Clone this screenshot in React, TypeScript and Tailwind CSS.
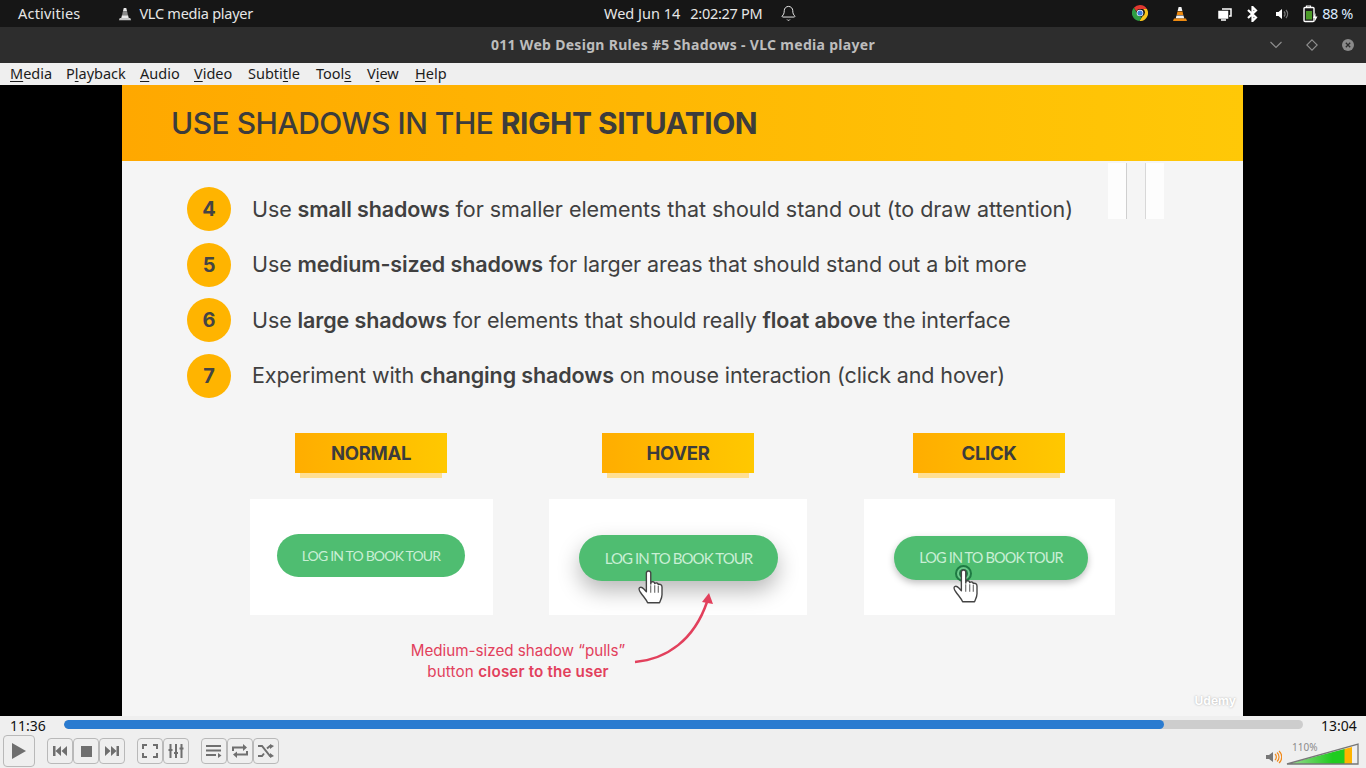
import type { ReactNode } from 'react'
import { Bell } from 'lucide-react'

const menus = [
  { pre: '', key: 'M', post: 'edia', w: 'w-[42px]' },
  { pre: 'P', key: 'l', post: 'ayback', w: 'w-[60px]' },
  { pre: '', key: 'A', post: 'udio', w: 'w-[40px]' },
  { pre: '', key: 'V', post: 'ideo', w: 'w-[40px]' },
  { pre: 'Subti', key: 't', post: 'le', w: 'w-[54px]' },
  { pre: 'Tool', key: 's', post: '', w: 'w-[37px]' },
  { pre: 'V', key: 'i', post: 'ew', w: 'w-[34px]' },
  { pre: '', key: 'H', post: 'elp', w: 'w-[32px]' },
]

function Cone({ size = 16, mono = false }: { size?: number; mono?: boolean }) {
  return (
    <svg width={size} height={size} viewBox="0 0 16 16">
      <path d="M6.6 1h2.8l1 4H5.600z" fill={mono ? '#e8e8e8' : '#f5f5f5'} />
      <path d="M5.400 5.500h5.200l.7 3.500H4.700z" fill={mono ? '#8a8a8a' : '#ee8a10'} />
      <path d="M4.500 9.500h7l.8 3H3.700z" fill={mono ? '#e8e8e8' : '#f5f5f5'} />
      <path d="M2 12.500h12l1 2.500H1z" fill={mono ? '#c4c4c4' : '#ee8a10'} />
    </svg>
  )
}

function Chrome() {
  return (
    <svg className="mb-[1px]" width="16" height="16" viewBox="0 0 16 16">
      <path d="M8 0a8 8 0 0 1 6.930 4H8a4 4 0 0 0-3.700 2.400L1.900 2.800A8 8 0 0 1 8 0z" fill="#e0392f" />
      <path d="M14.930 4A8 8 0 0 1 7.400 16l3.300-5a4 4 0 0 0 .4-7z" fill="#f8c51c" />
      <path d="M1.900 2.800l3.500 6.100A3.800 3.800 0 0 0 10 11.500L7.400 16A8 8 0 0 1 1.900 2.800z" fill="#2f9e44" />
      <circle cx="8" cy="8" r="3.300" fill="#fff" />
      <circle cx="8" cy="8" r="2.600" fill="#3b7ddd" />
    </svg>
  )
}

function TopBar() {
  return (
    <div className="relative flex h-[27px] shrink-0 items-center bg-[#161616] text-[14.500px] text-[#e6e6e6]">
      <span className="ml-[18px] tracking-[0.2px]">Activities</span>
      <span className="ml-[38px] flex items-center gap-[7px] tracking-[-0.25px]">
        <Cone size={14} mono />
        VLC media player
      </span>
      <div className="absolute left-[604px] top-0 flex h-[27px] items-center">
        <span>Wed Jun 14</span>
        <span className="ml-[10px] tracking-[-0.3px]">2:02:27 PM</span>
        <Bell className="ml-[18px] h-[17px] w-[17px]" strokeWidth={1.400} />
      </div>
      <div className="ml-auto flex items-center">
        <Chrome />
        <span className="ml-[24px]"><Cone size={16} /></span>
        <svg className="ml-[30px]" width="14" height="14" viewBox="0 0 14 14" fill="none" stroke="#fff" strokeWidth="1.500">
          <rect x="1" y="4.500" width="8.500" height="6.500" fill="#fff" />
          <path d="M4 2h9v7h-2M3 13h5" />
        </svg>
        <svg className="ml-[14px]" width="13" height="16" viewBox="0 0 13 16" fill="none" stroke="#fff" strokeWidth="2.200">
          <path d="M2 4l8 7.500L6.500 15V1L10 4.500 2 12" />
        </svg>
        <svg className="ml-[16px]" width="14" height="14" viewBox="0 0 14 14">
          <path d="M1 5h2.500L7 2v10L3.500 9H1z" fill="#fff" />
          <path d="M9 4.500a3.500 3.500 0 0 1 0 5M11 3a6 6 0 0 1 0 8" fill="none" stroke="#777" strokeWidth="1.300" />
        </svg>
        <svg className="ml-[14px]" width="16" height="18" viewBox="0 0 16 18">
          <path d="M3.500 2.500V1h4v1.500" fill="none" stroke="#fff" strokeWidth="1.200" />
          <rect x="1" y="2.500" width="10" height="14" rx="1" fill="none" stroke="#fff" strokeWidth="1.400" />
          <rect x="3" y="6" width="6" height="8.500" fill="#4b9a28" />
          <path d="M12.500 8l-2.500 5h2l-.500 4 3-5.500h-2z" fill="#fff" />
        </svg>
        <span className="ml-[3px] mr-[13px] tracking-[-0.4px] text-[#dcebff]">88 %</span>
      </div>
    </div>
  )
}

function TitleBar() {
  return (
    <div className="relative flex h-[36px] shrink-0 items-center justify-center bg-[#2d2d2d] pb-[2px] text-[14px] font-bold tracking-[0.3px] text-[#bdbdbd]">
      011 Web Design Rules #5 Shadows - VLC media player
      <div className="absolute right-[12px] top-[12px] flex items-center gap-[24px]">
        <svg width="12" height="8" viewBox="0 0 12 8" fill="none" stroke="#8f8f8f" strokeWidth="1.100">
          <path d="M.5 1L6 6.500 11.500 1" />
        </svg>
        <svg width="12" height="12" viewBox="0 0 12 12" fill="none" stroke="#8f8f8f" strokeWidth="1.100">
          <path d="M6 .8L11.200 6 6 11.200 .8 6z" />
        </svg>
        <svg width="12" height="12" viewBox="0 0 12 12">
          <circle cx="6" cy="6" r="6" fill="#8a8a8a" />
          <path d="M3.800 3.800l4.400 4.400M8.200 3.800l-4.400 4.400" stroke="#2d2d2d" strokeWidth="1.300" />
        </svg>
      </div>
    </div>
  )
}

function MenuBar() {
  return (
    <div className="flex h-[22px] shrink-0 items-center gap-[14px] bg-[#efefef] pl-[10px] text-[14.500px] text-[#1c1c1c]">
      {menus.map((m) => (
        <span key={m.pre + m.key} className={m.w}>
          {m.pre}
          <span className="underline underline-offset-2">{m.key}</span>
          {m.post}
        </span>
      ))}
    </div>
  )
}

function Num({ n }: { n: number }) {
  return (
    <div className="flex h-[44px] w-[44px] shrink-0 items-center justify-center rounded-full bg-[#ffb400] text-[20px] font-bold text-[#444]">
      {n}
    </div>
  )
}

function Hand({ className }: { className: string }) {
  return (
    <svg className={className} width="30" height="40" viewBox="0 0 24 32">
      <path
        d="M7.500 3a1.800 1.800 0 0 1 3.500 0v9l.3-1.500c1.500-.8 2.700 0 2.900 1.200.900-1 2.600-.6 2.900.8 1.300-.7 2.900.2 2.900 1.800v6.200c0 2.500-1 4-2 6.500H8.500c-1-2.500-3-4.500-5.500-8-.9-1.300-2-3-1-4 1.200-1 2.600 0 3.500 1l2 2.200z"
        fill="#fff"
        stroke="#444"
        strokeWidth="1.100"
        strokeLinejoin="round"
      />
      <path d="M11 13v6M14.200 13v6M17 13.500V19" stroke="#555" strokeWidth="0.800" />
    </svg>
  )
}

function Label({ text, className = '' }: { text: string; className?: string }) {
  return (
    <div className={`relative mb-[26px] h-[40px] w-[152px] ${className}`}>
      <div className="absolute bottom-[-5px] left-[5px] right-[5px] h-[10px] bg-[#ffdf93]" />
      <div className="absolute inset-0 flex items-center justify-center bg-gradient-to-r from-[#ffad00] to-[#ffc800] pt-[2px] text-[18.500px] font-bold tracking-[-0.300px] text-[#3c3c3c]">
        {text}
      </div>
    </div>
  )
}

function Btn({ className }: { className: string }) {
  return (
    <button className={`flex items-center justify-center rounded-full bg-[#4fbd71] font-['Lato'] text-[#c9efd5] ${className}`}>
      LOG IN TO BOOK TOUR
    </button>
  )
}

function Slide() {
  return (
    <div className="relative h-full w-[1121px] overflow-hidden bg-[#f5f5f5] font-['Inter'] text-[#404040]">
      <div className="flex h-[76px] items-center bg-gradient-to-r from-[#ffa800] to-[#ffc807] pl-[49px] text-[30px] font-medium tracking-[-0.5px] text-[#3c3c3c]">
        USE SHADOWS IN THE&nbsp;<b className="font-bold">RIGHT SITUATION</b>
      </div>
      <div className="absolute left-[986px] top-[78px] flex h-[56px]">
        <div className="w-[18px] bg-[#fdfdfd]" />
        <div className="w-px bg-[#cfcfcf]" />
        <div className="w-[18px]" />
        <div className="w-px bg-[#d8d8d8]" />
        <div className="w-[18px] bg-[#fdfdfd]" />
      </div>

      <div className="ml-[65px] mt-[26px] flex flex-col gap-[11.500px] text-[21.500px] tracking-[-0.110px]">
        <div className="flex items-center gap-[21px]">
          <Num n={4} />
          <span>Use <b className="font-semibold">small shadows</b> <span className="tracking-[-0.03px]">for smaller elements that should stand out (to draw attention)</span></span>
        </div>
        <div className="flex items-center gap-[21px]">
          <Num n={5} />
          <span>Use <b className="font-semibold">medium-sized shadows</b> for larger areas that should stand out a bit more</span>
        </div>
        <div className="flex items-center gap-[21px]">
          <Num n={6} />
          <span>Use <b className="font-semibold">large shadows</b> for elements that should really <b className="font-semibold">float above</b> the interface</span>
        </div>
        <div className="flex items-center gap-[21px]">
          <Num n={7} />
          <span>Experiment with <b className="font-semibold">changing shadows</b> on mouse interaction (click and hover)</span>
        </div>
      </div>

      <div className="ml-[128px] mt-[35px] flex gap-[56px]">
        <div className="flex w-[243px] flex-col items-center">
          <Label text="NORMAL" className="mr-[1px]" />
          <div className="flex h-[116px] w-full items-center justify-center bg-white">
            <Btn className="mb-[3px] mr-[1px] h-[43px] w-[188px] text-[14px] tracking-[-0.82px]" />
          </div>
        </div>
        <div className="flex w-[258px] flex-col items-center">
          <Label text="HOVER" />
          <div className="relative flex h-[116px] w-full items-center justify-center bg-white">
            <Btn className="ml-[1px] mt-[3px] h-[46px] w-[199px] text-[15px] tracking-[-0.92px] shadow-[0_10px_22px_rgba(0,0,0,0.28)]" />
            <Hand className="absolute left-[88px] top-[70px]" />
          </div>
        </div>
        <div className="ml-[1px] flex w-[251px] flex-col items-center">
          <Label text="CLICK" className="mr-[1px]" />
          <div className="relative flex h-[116px] w-full items-center justify-center bg-white">
            <Btn className="ml-[3px] mt-[2px] h-[44px] w-[194px] text-[14.500px] tracking-[-0.85px] shadow-[0_3px_7px_rgba(0,0,0,0.25)]" />
            <div className="absolute left-[91px] top-[66px] flex h-[17px] w-[17px] items-center justify-center rounded-full border-[2px] border-[#1e7a43] bg-[#6cc98b]">
              <div className="h-[9px] w-[9px] rounded-full bg-[#1e7a43]" />
            </div>
            <Hand className="absolute left-[88px] top-[69px]" />
          </div>
        </div>
      </div>

      <div className="ml-[189px] mt-[25px] w-[414px] text-center text-[15.200px] leading-[21px] text-[#e2405c]">
        Medium-sized shadow “pulls”
        <br />
        <span className="tracking-[0.15px]">button <b className="font-semibold">closer to the user</b></span>
      </div>

      <svg className="absolute left-[510px] top-[505px]" width="85" height="75" viewBox="0 0 85 75" fill="none">
        <path d="M3 72C35 69 62 50 75 12" stroke="#e2405c" strokeWidth="2.500" />
        <path d="M77 3l4 11-11-2z" fill="#e2405c" />
      </svg>

      <span className="absolute bottom-[6px] right-[7px] text-[12px] font-bold text-white [text-shadow:0_0_2px_#aaa]">Udemy</span>
    </div>
  )
}

function Tool({ children, className = 'h-[26px] w-[26px]' }: { children: ReactNode; className?: string }) {
  return (
    <div className={`flex items-center justify-center rounded-[4px] border border-[#b9b9b9] bg-[#efefef] ${className}`}>
      {children}
    </div>
  )
}

function Controls() {
  const c = '#6f6f6f'
  return (
    <div className="flex h-[33px] shrink-0 items-center bg-[#efefef] pb-[1px] pl-[3px]">
      <Tool className="h-[32px] w-[32px]">
        <svg width="16" height="18" viewBox="0 0 16 18"><path d="M1 1l14 8-14 8z" fill={c} /></svg>
      </Tool>
      <div className="ml-[12px] flex">
        <Tool>
          <svg width="16" height="12" viewBox="0 0 16 12"><path d="M1 1h2.500v10H1zM9 1v10L3.500 6zM15 1v10L9.500 6z" fill={c} /></svg>
        </Tool>
        <Tool>
          <svg width="11" height="11" viewBox="0 0 11 11"><rect width="11" height="11" fill={c} /></svg>
        </Tool>
        <Tool>
          <svg width="16" height="12" viewBox="0 0 16 12"><path d="M15 1h-2.500v10H15zM7 1v10l5.500-5zM1 1v10l5.500-5z" fill={c} /></svg>
        </Tool>
      </div>
      <div className="ml-[12px] flex">
        <Tool>
          <svg width="16" height="14" viewBox="0 0 16 14" fill="none" stroke={c} strokeWidth="2">
            <path d="M1 5V1h4M11 1h4v4M15 9v4h-4M5 13H1V9" />
          </svg>
        </Tool>
        <Tool>
          <svg width="16" height="14" viewBox="0 0 16 14" fill="none" stroke={c} strokeWidth="2">
            <path d="M2.500 0v14M8 0v14M13.500 0v14M0.500 6h4M6 9h4M11.500 4.500h4" />
          </svg>
        </Tool>
      </div>
      <div className="ml-[12px] flex">
        <Tool>
          <svg width="16" height="14" viewBox="0 0 16 14" fill="none" stroke={c} strokeWidth="2">
            <path d="M0 2h15M0 6.500h15M0 11h10" />
            <path d="M12 9l3.500 2.500L12 14z" fill={c} stroke="none" />
          </svg>
        </Tool>
        <Tool>
          <svg width="16" height="14" viewBox="0 0 16 14" fill="none" stroke={c} strokeWidth="2">
            <path d="M1 7V3.500h12M15 7v3.500H3" />
            <path d="M11 0l4 3.500-4 3.500zM5 7.500L1 10.500l4 3.500z" fill={c} stroke="none" />
          </svg>
        </Tool>
        <Tool>
          <svg width="16" height="14" viewBox="0 0 16 14" fill="none" stroke={c} strokeWidth="2">
            <path d="M0 2h4l8 10h2M0 12h4l2-2.500M9 4.500L12 2h2" />
            <path d="M12 0l4 2-4 3zM12 9l4 3-4 2z" fill={c} stroke="none" />
          </svg>
        </Tool>
      </div>
      <div className="relative ml-auto mr-[6px] flex h-[32px] w-[94px] items-end">
        <svg className="mb-[3px]" width="16" height="14" viewBox="0 0 16 14">
          <path d="M0 5h3l4-3v10L3 9H0z" fill="#777" />
          <path d="M9 4a4 4 0 0 1 0 6M11 2.500a6 6 0 0 1 0 9M13 1a8 8 0 0 1 0 12" fill="none" stroke="#f28a1c" strokeWidth="1.200" />
        </svg>
        <span className="absolute left-[26px] top-[5px] text-[10px] leading-[15px] text-[#8b8b8b]">110%</span>
        <svg className="absolute bottom-[2px] right-0" width="74" height="22" viewBox="0 0 74 22">
          <defs>
            <linearGradient id="vol" x1="0" x2="1" y1="0" y2="0">
              <stop offset="0" stopColor="#a4d99a" />
              <stop offset="0.7" stopColor="#1fcc1f" />
              <stop offset="0.87" stopColor="#1fcc1f" />
              <stop offset="0.9" stopColor="#ffb400" />
            </linearGradient>
          </defs>
          <path d="M1 21L66 4v17z" fill="url(#vol)" />
          <path d="M1 21L72 1v20z" fill="none" stroke="#777" strokeWidth="1.300" />
        </svg>
      </div>
    </div>
  )
}

export default function App() {
  return (
    <div className="flex h-[768px] w-[1366px] flex-col overflow-hidden font-['Noto_Sans',sans-serif]">
      <TopBar />
      <TitleBar />
      <MenuBar />
      <div className="flex h-[631px] shrink-0 bg-black pl-[122px]">
        <Slide />
      </div>
      <div className="flex h-[19px] shrink-0 items-center bg-[#efefef] text-[14px] text-[#111]">
        <span className="w-[64px] pl-[10px]">11:36</span>
        <div className="mb-[2px] h-[9px] w-[1239px] overflow-hidden rounded-full bg-[#cdcdcd]">
          <div className="h-full w-[1100px] rounded-full bg-[#2a7bd0]" />
        </div>
        <span className="ml-[18px]">13:04</span>
      </div>
      <Controls />
    </div>
  )
}
